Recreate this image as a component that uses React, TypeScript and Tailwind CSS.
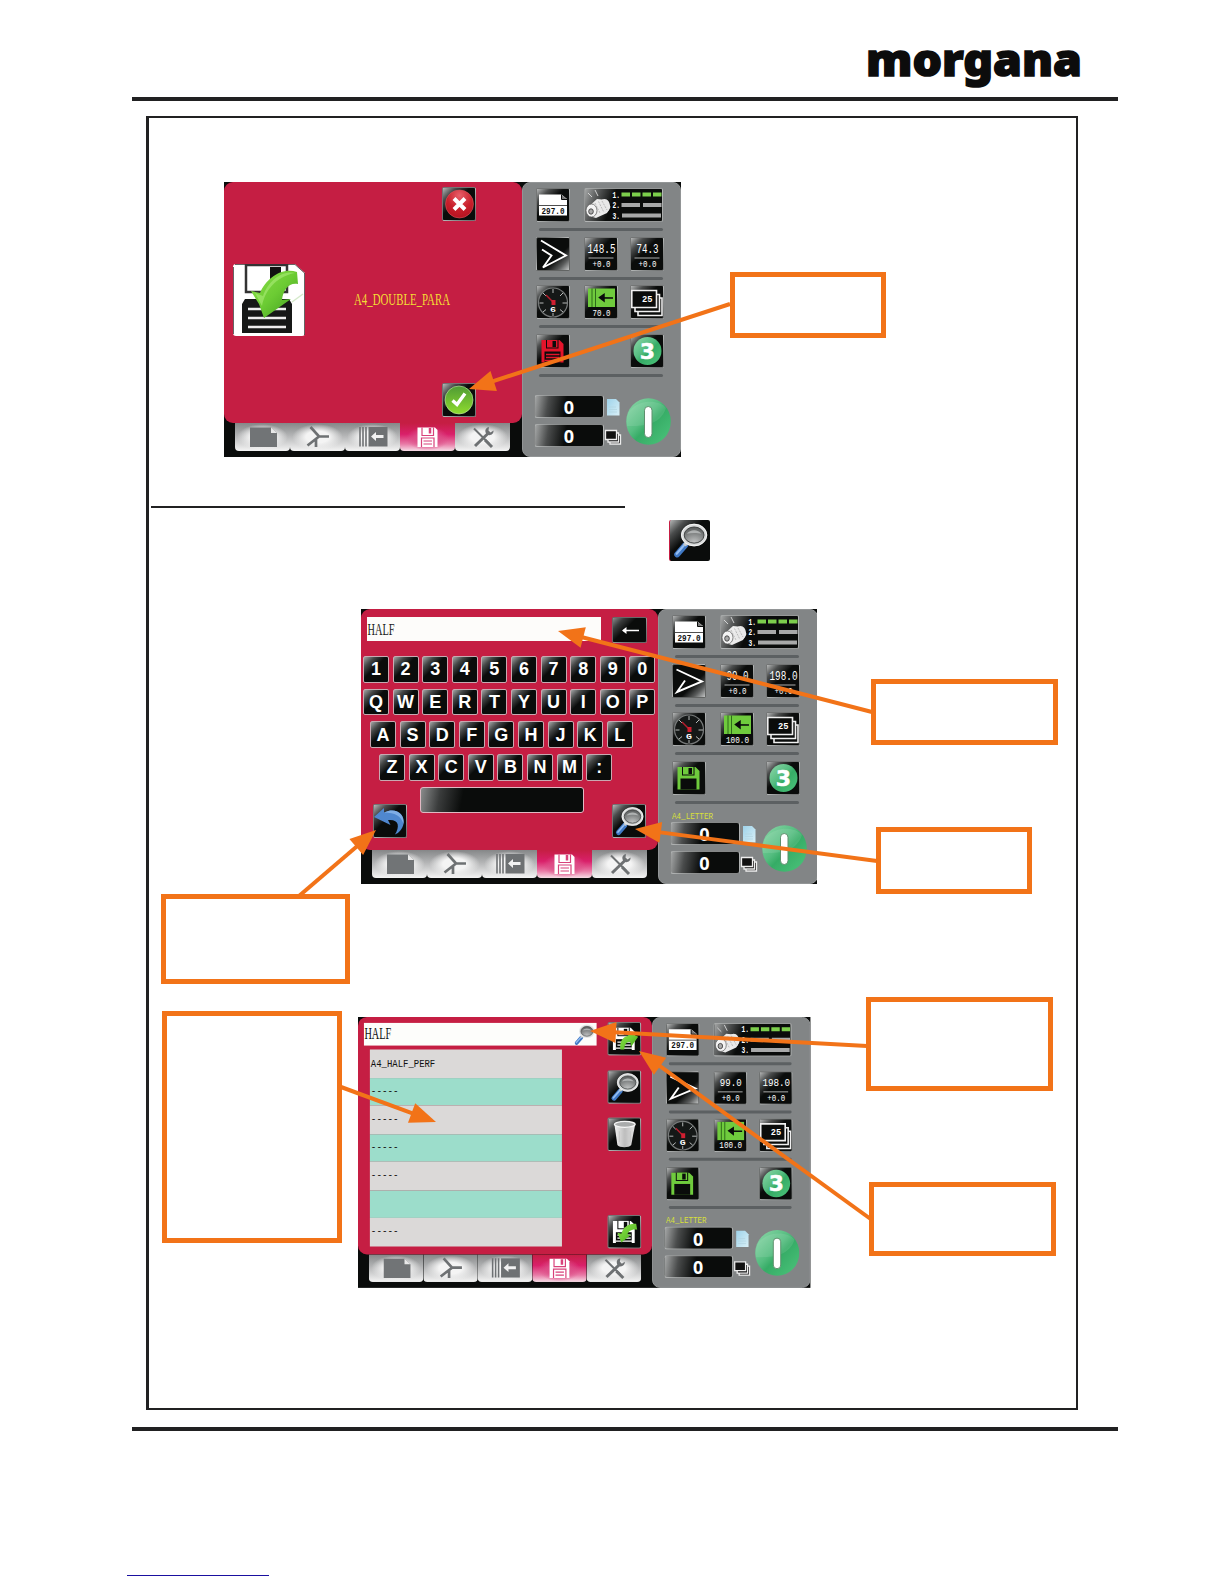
import type { ReactNode } from "react";

const pixel = "Liberation Mono, monospace";
const serif = "Liberation Serif, serif";

type LabelProps = {
	x: number;
	y: number;
	w: number;
	size: number;
	fill?: string;
	bold?: boolean;
	font?: string;
	children: string;
};

// text squeezed to a fixed width, like the bitmap fonts of the display
function Label({ x, y, w, size, fill = "#fff", bold, font = pixel, children }: LabelProps) {
	return (
		<text
			x={x}
			y={y}
			textLength={w}
			lengthAdjust="spacingAndGlyphs"
			fontSize={size}
			fontFamily={font}
			fontWeight={bold ? 700 : 400}
			fill={fill}
		>
			{children}
		</text>
	);
}

function Gradients() {
	return (
		<svg className="absolute h-0 w-0">
			<defs>
				<linearGradient id="leaf" x1="0" y1="0" x2="1" y2="1">
					<stop offset="0" stopColor="#8be04a" />
					<stop offset="0.5" stopColor="#6ccb33" />
					<stop offset="1" stopColor="#3c9a1c" />
				</linearGradient>
				<radialGradient id="red" cx="0.5" cy="0.2" r="0.9">
					<stop offset="0" stopColor="#e8606a" />
					<stop offset="0.5" stopColor="#c9202c" />
					<stop offset="1" stopColor="#b00f1d" />
				</radialGradient>
				<linearGradient id="tick" x1="0" y1="0" x2="0" y2="1">
					<stop offset="0" stopColor="#4f9a35" />
					<stop offset="1" stopColor="#8fdc2e" />
				</linearGradient>
				<linearGradient id="jade" x1="0" y1="0" x2="1" y2="1">
					<stop offset="0" stopColor="#8fd8ab" />
					<stop offset="0.42" stopColor="#55bd80" />
					<stop offset="0.55" stopColor="#36ac66" />
					<stop offset="1" stopColor="#4dc57c" />
				</linearGradient>
				<radialGradient id="lens" cx="0.5" cy="0.9" r="0.9">
					<stop offset="0" stopColor="#c4c6c6" />
					<stop offset="1" stopColor="#4b4e4e" />
				</radialGradient>
				<linearGradient id="bin" x1="0" y1="0" x2="1" y2="0">
					<stop offset="0" stopColor="#f2f2f2" />
					<stop offset="0.5" stopColor="#bcbcbc" />
					<stop offset="1" stopColor="#e6e6e6" />
				</linearGradient>
				<linearGradient id="paper" x1="0" y1="0" x2="1" y2="1">
					<stop offset="0" stopColor="#9fd3ea" />
					<stop offset="1" stopColor="#d9f0f7" />
				</linearGradient>
			</defs>
		</svg>
	);
}

const tile =
	"h-[34px] w-[34px] shrink-0 overflow-hidden rounded-[2px] border border-[#b9bcbc]/60 bg-[#0a0c0b] bg-[linear-gradient(135deg,#b5b7b7_0%,#4a4c4c_20%,#0a0c0b_42%)]";

function Tile({ children }: { children?: ReactNode }) {
	return (
		<div className={tile}>
			<svg className="-m-px block h-[34px] w-[34px]" viewBox="0 0 34 34">
				{children}
			</svg>
		</div>
	);
}

function Magnifier() {
	return (
		<g>
			<path d="M13 21 L6.500 28.500" stroke="#3f78c4" strokeWidth="5" strokeLinecap="round" />
			<path d="M12.500 20.500 L6 28" stroke="#93bdf0" strokeWidth="1.800" strokeLinecap="round" />
			<path d="M15 18 L12.500 21" stroke="#c9cccc" strokeWidth="3" />
			<ellipse cx="20.500" cy="12.500" rx="9.500" ry="8" fill="url(#lens)" stroke="#d9dbdb" strokeWidth="2.600" />
			<ellipse cx="20.500" cy="12.500" rx="10.500" ry="9" fill="none" stroke="#fff" strokeWidth="0.600" />
			<ellipse cx="20.500" cy="12.500" rx="8.200" ry="6.700" fill="none" stroke="#3c3f3f" strokeWidth="0.800" />
			<path d="M14.500 11.500 C17 7.500 24 7.500 26.500 11.500 C23 10.500 18 10.500 14.500 11.500Z" fill="#aeb1b1" />
		</g>
	);
}

function Floppy({ color, hole = "#0a0c0b", lines }: { color: string; hole?: string; lines?: boolean }) {
	return (
		<g>
			<path d="M5.500 6 H23.500 L27.500 10 V28.500 H5.500Z" fill={color} />
			<rect x="10" y="6" width="12.500" height="8.500" fill={hole} />
			<rect x="11" y="6" width="10.500" height="7.500" fill={color} />
			<rect x="16.500" y="7" width="3.500" height="6" fill={hole} />
			<rect x="8.500" y="17.500" width="16" height="11" fill={hole} />
			{lines && <path d="M10 20.500H23.500M10 23.500H23.500M8.500 26.500H25" stroke={color} strokeWidth="1.300" />}
		</g>
	);
}

function FileTile({ save }: { save?: boolean }) {
	return (
		<Tile>
			<Floppy color="#fff" lines />
			{save ? (
				<path d="M29 9 L30 15 C24 14 21 17 20 20 L24 20 L14 28 L10 18 L14 19 C16 12 22 8 29 9Z" fill="url(#leaf)" />
			) : (
				<path d="M13 28 C12 19 16 15 21 14 L20 10 L31 15 L24 25 L23 20 C19 20 17 23 17 28Z" fill="url(#leaf)" />
			)}
		</Tile>
	);
}

type ScreenProps = {
	first: string;
	second: string;
	feed: string;
	saved?: string;
	folded?: boolean;
	children: ReactNode;
};

function Separator() {
	return <div className="ml-[3px] mt-[6px] h-[3px] w-[124px] rounded-full bg-[#5c6062]" />;
}

function ValueTile({ children }: { children: string }) {
	const w = children.length > 4 ? 28 : 22;
	return (
		<Tile>
			<Label x={17.5 - w / 2} y={15.5} w={w} size={12}>
				{children}
			</Label>
			<path d="M4.500 21H29.500" stroke="#d5d7d7" strokeWidth="0.800" />
			<Label x={8.5} y={30} w={18} size={9}>
				+0.0
			</Label>
		</Tile>
	);
}

function Counter() {
	return (
		<div className="flex h-[23px] w-[70px] items-center justify-center rounded-[3px] border border-[#b9bcbc]/70 bg-[#0a0c0b] bg-[linear-gradient(100deg,#a5a7a7_0%,#4a4c4c_20%,#0a0c0b_45%)] text-[18px] font-bold leading-none text-white">
			0
		</div>
	);
}

function Sidebar({ first, second, feed, saved, folded }: Omit<ScreenProps, "children">) {
	return (
		<div className="h-[275px] flex-1 rounded-[8px] border border-[#929596] bg-[#828586] pl-[13px] pt-[5px]">
			<div className="h-[48.500px]">
				<div className="flex gap-[14px]">
					<Tile>
						<path d="M3 6.500H25.500L31 11V27.500H3Z" fill="#fff" />
						<path d="M25.500 6.500V11.500H31" fill="#777" stroke="#0a0c0b" />
						<path d="M3 17.500H31" stroke="#222" strokeWidth="0.800" />
						<Label x={5.5} y={25.500} w={23} size={9} fill="#111" bold>
							297.0
						</Label>
					</Tile>
					<div className="h-[34px] w-[79px] overflow-hidden rounded-[2px] border border-[#b9bcbc]/80 bg-[#0a0c0b] bg-[linear-gradient(110deg,#a5a7a7_0%,#5a5c5c_15%,#0a0c0b_36%)]">
						<svg className="-m-px block h-[34px] w-[79px]" viewBox="0 0 79 34">
							<path d="M4 5L8 9M11 2L14 8" stroke="#ddd" strokeWidth="0.900" />
							<path d="M3 20L13 11L23 12L26.500 19L23 25L12 30L5 28Z" fill="#ececec" />
							<ellipse cx="20.500" cy="18" rx="5.500" ry="7" fill="#e8e8e8" />
							<ellipse cx="7.500" cy="22.500" rx="5.500" ry="6.500" fill="#f4f4f4" stroke="#555" strokeWidth="0.700" />
							<ellipse cx="7" cy="23.500" rx="2.300" ry="2.700" fill="#aaa" stroke="#333" strokeWidth="0.800" />
							<path d="M11 15L16 25M14.500 13.500L19.500 23.500M18 13L23 22" stroke="#9b9b9b" strokeWidth="0.600" strokeDasharray="2 1" />
							<Label x={28.500} y={9.500} w={7.500} size={9} bold>1.</Label>
							<Label x={28.500} y={20} w={7.500} size={9} bold>2.</Label>
							<Label x={28.500} y={30.500} w={7.500} size={9} bold>3.</Label>
							<path d="M37.500 6.500H46M48 6.500H56.500M58.500 6.500H67M69 6.500H77.500" stroke="#7cce4c" strokeWidth="4" />
							<path d="M37.500 17H56M59 17H77.500" stroke="#a8a9a9" strokeWidth="4" />
							<path d="M38 27.500H77" stroke="#a8a9a9" strokeWidth="4" />
						</svg>
					</div>
				</div>
				<Separator />
			</div>
			<div className="h-[48.500px]">
				<div className="flex gap-[12px]">
					<div className="mr-[2px] h-[34px] w-[34px] overflow-hidden rounded-[2px] border border-[#b9bcbc]/50 bg-[linear-gradient(135deg,#0a0c0b_62%,#5a5c5c_82%,#c4c6c6_100%)]">
						<svg className="-m-px block h-[34px] w-[34px]" viewBox="0 0 34 34" fill="none" stroke="#fff" strokeWidth="1.900">
							{folded ? (
								<path d="M4.500 5.500L30 17.500L5 28L13 16.500" />
							) : (
								<path d="M5 3.500L30 18.500L7 30.500L15.500 18.500L6 12.500" />
							)}
						</svg>
					</div>
					<ValueTile>{first}</ValueTile>
					<ValueTile>{second}</ValueTile>
				</div>
				<Separator />
			</div>
			<div className="h-[49px]">
				<div className="flex gap-[12px]">
					<div className="mr-[2px]">
						<Tile>
							<circle cx="17" cy="17.500" r="14.500" fill="#151817" stroke="#777a7a" strokeWidth="1.200" />
							<path d="M17 4V8M17 28V31M3.500 18H7.500M26.500 18H31M7 8L10 11M27 8L24 11M7 27L10 24.500M27 27L24 24.500" stroke="#c9cccc" strokeWidth="0.900" />
							<path d="M10 10L18 18" stroke="#b71c2c" strokeWidth="1.500" />
							<rect x="15.500" y="15" width="4" height="5" fill="#d01f31" />
							<Label x={14} y={26.500} w={6} size={8} bold>{folded ? "G" : "6"}</Label>
						</Tile>
					</div>
					<Tile>
						<rect x="4" y="3.500" width="27" height="18.500" fill="#6fcb3d" />
						<path d="M8 3.500V22M11.500 3.500V22" stroke="#276017" strokeWidth="0.900" />
						<path d="M29 13H20V16L15.500 12.500L20 9.500V12.500" fill="#0a0c0b" stroke="#0a0c0b" strokeWidth="1.500" />
						<Label x={feed.length > 4 ? 6 : 8.500} y={30.500} w={feed.length > 4 ? 23 : 18} size={8.5}>
							{feed}
						</Label>
					</Tile>
					<Tile>
						<g fill="#0a0c0b" stroke="#f0f0f0" strokeWidth="1.600">
							<path d="M8 13H32V30.500H8Z" />
							<path d="M5 9.500H29.500V26.500H5Z" />
							<path d="M1.800 5.500H26.500V22.500H1.800Z" />
						</g>
						<Label x={12} y={17} w={10.500} size={9.500} bold>25</Label>
					</Tile>
				</div>
				<Separator />
			</div>
			<div className="h-[48.500px]">
				<div className="flex gap-[60px]">
					<Tile>
						<Floppy color={saved ? "#6fcb3d" : "#e3142b"} lines={!saved} />
					</Tile>
					<Tile>
						<circle cx="17.500" cy="17" r="14" fill="url(#jade)" />
						<text x="17.500" y="25" fontSize="22" fontWeight="800" fontFamily="DejaVu Sans, sans-serif" textAnchor="middle" fill="#fff" stroke="#fff" strokeWidth="0.500">
							3
						</text>
					</Tile>
				</div>
				<Separator />
			</div>
			<div className="h-[12.500px]">
				{saved && (
					<svg className="block h-[11px] w-[50px]" viewBox="0 0 50 11">
						<Label x={0} y={8.500} w={41} size={9} fill="#d8e03a">{saved}</Label>
					</svg>
				)}
			</div>
			<div className="-ml-[2px] flex">
				<div className="flex flex-col gap-[6px] font-['Open_Sans',sans-serif]">
					<Counter />
					<Counter />
				</div>
				<svg className="h-[54px] w-[22px]" viewBox="0 0 22 54">
					<path d="M3 4H12L15.500 7.500V20.500H3Z" fill="url(#paper)" />
					<path d="M5 12H12M5 14.500H13M5 17H13" stroke="#b2d4e0" strokeWidth="0.700" />
					<g fill="#111" stroke="#ededed" strokeWidth="1.300">
						<path d="M6 40H16.500V49H6Z" />
						<path d="M4 38H14.500V47H4Z" />
						<path d="M1.500 35.500H12.500V44.500H1.500Z" />
					</g>
				</svg>
				<svg className="mt-[3px] h-[47px] w-[45px]" viewBox="0 0 45 47">
					<ellipse cx="22.500" cy="23.500" rx="22.300" ry="23.200" fill="url(#jade)" />
					<path d="M4 12C15 1 33 2 40 10C34 28 16 28 1 28C0 22 1 16 4 12Z" fill="#fff" opacity="0.100" />
					<rect x="18.500" y="8.500" width="7.500" height="31" rx="3.700" fill="#fff" stroke="#5e8f6d" strokeWidth="1" />
				</svg>
			</div>
		</div>
	);
}

function Tab({ active, children }: { active?: boolean; children: ReactNode }) {
	return (
		<div
			className={
				active
					? "h-[28px] w-[55px] rounded-b-[4px] bg-[radial-gradient(ellipse_at_50%_55%,#e88bb0_0%,#dd4f88_25%,transparent_55%),linear-gradient(to_bottom,#c51e43_0%,#d9206a_40%,#e87aa6_75%,#f7dce6_100%)]"
					: "h-[28px] w-[55px] rounded-b-[4px] bg-[radial-gradient(ellipse_at_50%_50%,#f4f4f4_30%,transparent_65%),linear-gradient(to_bottom,#858788_0%,#b4b5b6_45%,#f4f4f4_100%)]"
			}
		>
			<svg className="block h-[28px] w-[55px]" viewBox="0 0 55 28">
				{children}
			</svg>
		</div>
	);
}

function Tabs() {
	return (
		<div className="flex pl-[11px]">
			<Tab>
				<path d="M15 4.500H36L42 10V24H15Z" fill="#717476" />
				<path d="M36 4.500V10H42Z" fill="#e8e8e8" />
			</Tab>
			<Tab>
				<path d="M20.500 4L29 13.500H39M29 13.500L17.500 22.500M26 16V24" stroke="#6e7173" strokeWidth="2.700" fill="none" />
			</Tab>
			<Tab>
				<path d="M15 4V23.500M18 4V23.500M21 4V23.500" stroke="#6e7173" strokeWidth="1.600" />
				<rect x="23.500" y="4" width="19" height="19.500" fill="#6e7173" />
				<path d="M38.500 12H31V9L26 13.500L31 18V15H38.500Z" fill="#f2f2f2" />
			</Tab>
			<Tab active>
				<path d="M17.500 4.500H35L37.500 7V24H17.500Z" fill="#fff" />
				<path d="M22 4.500V12.500H33.500V4.500" fill="none" stroke="#d8417b" strokeWidth="1.200" />
				<path d="M30 5V10.500" stroke="#d8417b" strokeWidth="2.500" />
				<path d="M21.500 24V15H34V24M23.500 18H32M23.500 21H32" fill="none" stroke="#d8417b" strokeWidth="1.200" />
			</Tab>
			<Tab>
				<path d="M19 5.500L34 20.500" stroke="#6e7173" strokeWidth="2" />
				<path d="M30 17L37 24" stroke="#6e7173" strokeWidth="3" />
				<path d="M34.500 9L20 23" stroke="#6e7173" strokeWidth="3" />
				<path d="M34 4C29 5 30 10 32 11.500C35 13.500 39 11 38.500 7.500L35.500 9.500L33.500 7.500Z" fill="#6e7173" />
			</Tab>
		</div>
	);
}

function Screen({ children, ...rest }: ScreenProps) {
	return (
		<div className="flex h-[275px] w-[457px] bg-[#0a0c0b]">
			<div className={rest.folded ? "w-[296.500px]" : "w-[298px]"}>
				<div className="h-[241px] overflow-hidden rounded-[9px] bg-[#c51e43]">{children}</div>
				<Tabs />
			</div>
			<Sidebar {...rest} />
		</div>
	);
}

function SaveScreen() {
	return (
		<div className="flex">
			<div className="w-[218px] shrink-0 pl-[9px] pt-[82px]">
				<div className="flex items-center">
					<svg className="h-[72px] w-[72px] shrink-0" viewBox="0 0 72 72">
						<path d="M3 0H62L72 9V69Q72 72 69 72H3Q0 72 0 69V3Q0 0 3 0Z" fill="#fff" />
						<path d="M0.500 70V3M2 0.500H62L71.500 9V71" fill="none" stroke="#222" strokeWidth="0.700" />
						<path d="M13 1H54V28H13Z" fill="#fff" stroke="#333" strokeWidth="2.500" />
						<rect x="37" y="3" width="11" height="21" fill="#111" />
						<path d="M12 35H56L59 40V69H9V40Z" fill="#161817" />
						<path d="M15 45H53M15 54H53M15 63H53" stroke="#eee" strokeWidth="2.400" />
						<path d="M64 8L65 20C56 18 50 26 49 36L58 35L31 54L26 40L18 27L27 29C33 15 48 3 64 8Z" fill="url(#leaf)" />
						<path d="M62 9C49 6 35 17 30 32L22 29L29 42C32 27 42 13 62 9Z" fill="#b6f284" opacity="0.500" />
						<path d="M59 38L70 30" stroke="#b9dca8" strokeWidth="1.500" opacity="0.600" />
					</svg>
					<svg className="ml-[49px] h-[20px] w-[98px] shrink-0" viewBox="0 0 98 20">
						<Label x={0} y={14.500} w={96} size={16} fill="#f3dc35" font={serif}>A4_DOUBLE_PARA</Label>
					</svg>
				</div>
			</div>
			<div className="flex h-[241px] flex-col justify-between pb-[6px] pt-[5px]">
				<Tile>
					<circle cx="17.500" cy="17" r="14" fill="url(#red)" stroke="#d7545c" strokeWidth="0.600" />
					<path d="M12 11.500L23 22.500M23 11.500L12 22.500" stroke="#fff" strokeWidth="4" />
				</Tile>
				<Tile>
					<circle cx="17" cy="17" r="14" fill="url(#tick)" stroke="#c5e8ab" strokeWidth="0.600" />
					<path d="M10.500 17.500L15 21.500L23 10.500" fill="none" stroke="#fff" strokeWidth="3.400" />
				</Tile>
			</div>
		</div>
	);
}

function KeyRow({ keys }: { keys: string }) {
	return (
		<div className="flex gap-[3.600px]">
			{keys.split("").map((key) => (
				<div
					key={key}
					className="flex h-[26.500px] w-[26px] shrink-0 items-center justify-center rounded-[2px] border border-[#c9a9b1] bg-[#0a0c0b] bg-[linear-gradient(135deg,#a5a7a7_0%,#454747_22%,#0a0c0b_44%)] text-[18px] font-bold leading-none text-white"
				>
					{key}
				</div>
			))}
		</div>
	);
}

function KeyboardScreen() {
	return (
		<div className="pt-[8px]">
			<div className="flex gap-[11px] pl-[6px]">
				<div className="h-[24px] w-[234px] bg-[#fdfcfa]">
					<svg className="block h-[24px] w-[60px]" viewBox="0 0 60 24">
						<Label x={0.500} y={17.500} w={27} size={17} fill="#222" font={serif}>HALF</Label>
					</svg>
				</div>
				<div className="h-[26px] w-[35px] rounded-[2px] border border-[#a5a7a7]/60 bg-[linear-gradient(135deg,#8a8c8c_0%,#3a3c3c_20%,#0a0c0b_42%)]">
					<svg className="block h-[24px] w-[33px]" viewBox="0 0 33 24">
						<path d="M26 12.500H10" stroke="#fff" strokeWidth="1.700" />
						<path d="M9 12.500L13.500 9V16Z" fill="#fff" />
					</svg>
				</div>
			</div>
			<div className="flex flex-col gap-[6.200px] pl-[2px] pt-[13px]">
				<KeyRow keys="1234567890" />
				<KeyRow keys="QWERTYUIOP" />
				<div className="pl-[7px]">
					<KeyRow keys="ASDFGHJKL" />
				</div>
				<div className="pl-[16px]">
					<KeyRow keys="ZXCVBNM:" />
				</div>
			</div>
			<div className="flex pl-[12px] pt-[6px]">
				<div className="pt-[17px]">
					<Tile>
						<path d="M1 13L11 4V8.500C22 3 32 9 30.500 20C29.500 25 26 29 22 30.500C27 22 26 15 15 16L17.500 21Z" fill="#4f87cf" />
						<path d="M11 8.500C22 3 32 9 30.500 20C28 12 22 8.500 11 8.500Z" fill="#7fade6" />
					</Tile>
				</div>
				<div className="ml-[13px] h-[26px] w-[164px] rounded-[3px] border border-[#e0b9c3] bg-[linear-gradient(100deg,#8a8c8c_0%,#3a3c3c_12%,#0a0c0b_26%)]" />
				<div className="ml-[28px] pt-[17px]">
					<Tile>
						<Magnifier />
					</Tile>
				</div>
			</div>
		</div>
	);
}

const results = ["A4_HALF_PERF", "-----", "-----", "-----", "-----", "", "-----"];

function ResultsScreen() {
	return (
		<div className="flex pl-[6px]">
			<div className="w-[246px] shrink-0 pt-[6px]">
				<div className="flex h-[23px] w-[235px] justify-between bg-[#fdfdfb]">
					<svg className="block h-[23px] w-[60px]" viewBox="0 0 60 23">
						<Label x={0.500} y={16.500} w={27} size={17} fill="#111" font={serif}>HALF</Label>
					</svg>
					<svg className="h-[23px] w-[24px]" viewBox="2 1 31 31">
						<Magnifier />
					</svg>
				</div>
				<div className="ml-[6px] mt-[4px] w-[194px]">
					{results.map((name, i) => (
						<div key={i} className={i % 2 ? "h-[28.500px] bg-[#9cddcb]" : "h-[28.500px] bg-[#dbd9d8]"}>
							<svg className="block h-[28px] w-[90px]" viewBox="0 0 90 28">
								{name && (
									<Label x={1} y={name.length > 5 ? 17.500 : 16.500} w={name.length > 5 ? 65 : 28} size={11} fill="#111">
										{name}
									</Label>
								)}
							</svg>
						</div>
					))}
				</div>
			</div>
			<div className="flex h-[241px] flex-col gap-[14.500px] pb-[6px] pt-[5px]">
				<FileTile />
				<Tile>
					<Magnifier />
				</Tile>
				<Tile>
					<path d="M7 7L10 28C12 31 22 31 24 28L28 7Z" fill="url(#bin)" />
					<ellipse cx="17.500" cy="7" rx="10.500" ry="3" fill="#a9abab" stroke="#f5f5f5" strokeWidth="1.300" />
					<path d="M12 14V25M17.500 14V27M23 14V25" stroke="#c2c2c2" strokeWidth="0.800" />
				</Tile>
				<div className="mt-auto">
					<FileTile save />
				</div>
			</div>
		</div>
	);
}

const arrows = [
	[730, 304, 469, 389],
	[872, 712, 558, 631],
	[877, 861, 635, 829],
	[299, 896, 376, 830],
	[341, 1087, 436, 1122],
	[867, 1046, 590, 1031],
	[872, 1220, 639, 1051],
];

function Arrows() {
	return (
		<svg className="absolute inset-0 h-[1584px] w-[1224px]" viewBox="0 0 1224 1584">
			{arrows.map(([x1, y1, x2, y2]) => {
				const length = Math.hypot(x2 - x1, y2 - y1);
				const angle = (Math.atan2(y2 - y1, x2 - x1) * 180) / Math.PI;
				return (
					<g key={y1} transform={`translate(${x1} ${y1}) rotate(${angle})`} fill="#f27318">
						<path d={`M0 -2H${length - 20}V2H0Z`} />
						<path d={`M${length} 0L${length - 26} -10.500V10.500Z`} />
					</g>
				);
			})}
		</svg>
	);
}

const callout = "absolute border-x-[5.500px] border-y-[5px] border-[#f27318] bg-white";

export default function App() {
	return (
		<main className="relative h-[1584px] w-[1224px] overflow-hidden bg-white font-['Liberation_Sans',sans-serif]">
			<Gradients />
			<header className="mx-[132px] flex h-[101px] w-[986px] justify-end border-b-4 border-[#212122] pr-[34px] pt-[34px]">
				<svg className="h-[60px] w-[218px] shrink-0 overflow-visible" viewBox="0 0 218 60">
					<text x="0" y="42" textLength="216" lengthAdjust="spacingAndGlyphs" fontSize="45" fontWeight="900" fontFamily="Noto Sans, sans-serif" fill="#0c0c0c" stroke="#0c0c0c" strokeWidth="1.500">
						morgana
					</text>
				</svg>
			</header>

			<section className="ml-[146px] mt-[15px] h-[1294px] w-[932px] border-2 border-l-[3px] border-[#212122]">
				<div className="ml-[75px] mt-[64px]">
					<Screen first="148.5" second="74.3" feed="70.0">
						<SaveScreen />
					</Screen>
				</div>

				<div className="ml-[2px] mt-[49px] h-[2px] w-[474px] bg-[#212122]" />

				<div className="ml-[520px] mt-[12px] h-[41px] w-[41px] rounded-[2px] border-l border-[#c51e43] bg-[linear-gradient(135deg,#b5b7b7_0%,#4a4c4c_20%,#0a0c0b_42%)]">
					<svg className="h-[41px] w-[41px]" viewBox="1 0 33 34">
						<Magnifier />
					</svg>
				</div>

				<div className="ml-[212px] mt-[48px] w-[456px] overflow-hidden">
					<Screen first="99.0" second="198.0" feed="100.0" saved="A4_LETTER" folded>
						<KeyboardScreen />
					</Screen>
				</div>

				<div className="ml-[209px] mt-[133px] w-[457px] origin-top-left scale-x-[0.99] scale-y-[0.985]">
					<Screen first="99.0" second="198.0" feed="100.0" saved="A4_LETTER" folded>
						<ResultsScreen />
					</Screen>
				</div>
			</section>

			<footer className="ml-[127px] mt-[17px]">
				<div className="ml-[5px] h-[4px] w-[986px] bg-[#212122]" />
				<div className="mt-[144px] h-px w-[142px] bg-[#1a10a0]" />
			</footer>

			{/* annotations on top of the screens */}
			<div className={`${callout} left-[730px] top-[272px] h-[66px] w-[156px]`} />
			<div className={`${callout} left-[871px] top-[679px] h-[66px] w-[187px]`} />
			<div className={`${callout} left-[876px] top-[827px] h-[67px] w-[156px]`} />
			<div className={`${callout} left-[161px] top-[894px] h-[90px] w-[189px]`} />
			<div className={`${callout} left-[162px] top-[1011px] h-[232px] w-[180px]`} />
			<div className={`${callout} left-[866px] top-[997px] h-[94px] w-[187px]`} />
			<div className={`${callout} left-[869px] top-[1182px] h-[74px] w-[187px]`} />
			<Arrows />
		</main>
	);
}
